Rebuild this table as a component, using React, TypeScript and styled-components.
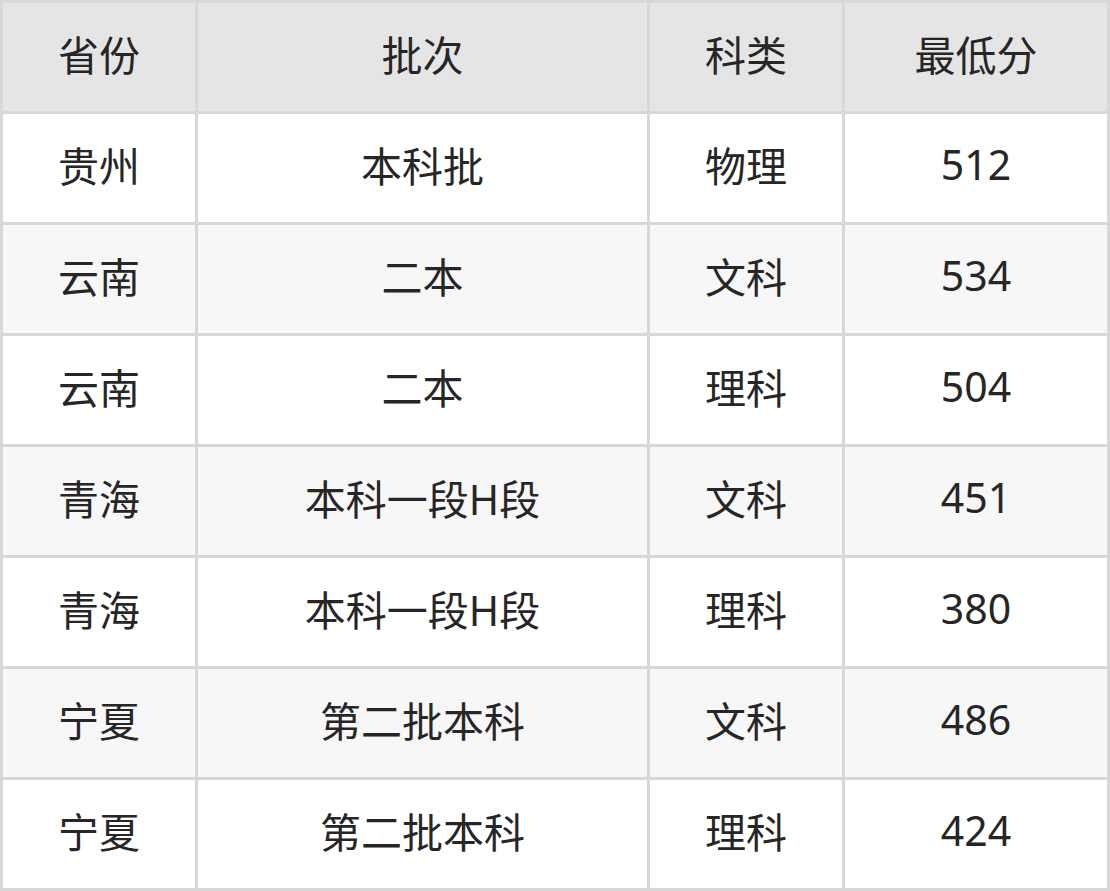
import styled, { createGlobalStyle } from "styled-components";

const GlobalStyle = createGlobalStyle`
  html, body {
    margin: 0;
    padding: 0;
    background: #ffffff;
  }
  body {
    font-family: "Noto Sans", "Noto Sans CJK SC", sans-serif;
  }
`;

const Table = styled.div`
  display: grid;
  grid-template-columns: 192px 449px 192px 262px;
  gap: 3px;
  padding: 3px;
  width: 1110px;
  box-sizing: border-box;
  background-color: #d8d8d8;
`;

const Cell = styled.div<{ $variant: "head" | "odd" | "even" }>`
  height: 108px;
  box-sizing: border-box;
  padding-bottom: 9px;
  display: flex;
  align-items: center;
  justify-content: center;
  font-size: 41px;
  color: #262626;
  background-color: ${(p) =>
    p.$variant === "head" ? "#e5e5e5" : p.$variant === "even" ? "#f7f7f7" : "#ffffff"};
`;

const headers = ["省份", "批次", "科类", "最低分"];

const rows = [
  ["贵州", "本科批", "物理", "512"],
  ["云南", "二本", "文科", "534"],
  ["云南", "二本", "理科", "504"],
  ["青海", "本科一段H段", "文科", "451"],
  ["青海", "本科一段H段", "理科", "380"],
  ["宁夏", "第二批本科", "文科", "486"],
  ["宁夏", "第二批本科", "理科", "424"],
];

export default function App() {
  return (
    <>
      <GlobalStyle />
      <Table>
        {headers.map((h) => (
          <Cell key={h} $variant="head">
            {h}
          </Cell>
        ))}
        {rows.map((row, i) =>
          row.map((text, j) => (
            <Cell key={`${i}-${j}`} $variant={i % 2 === 0 ? "odd" : "even"}>
              {text}
            </Cell>
          ))
        )}
      </Table>
    </>
  );
}
